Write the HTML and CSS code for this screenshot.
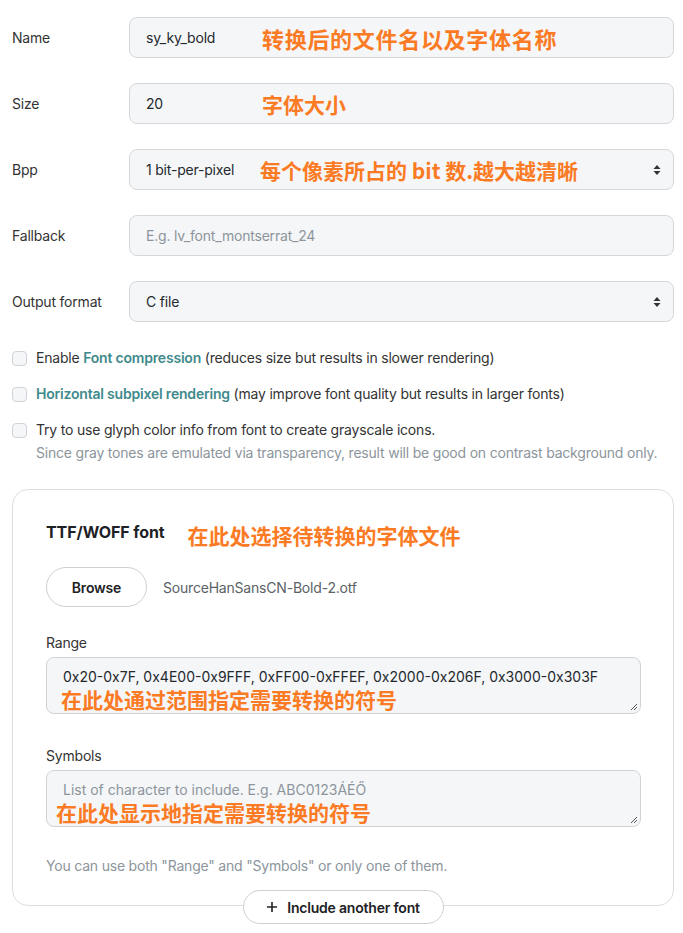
FILE: index.html
```html
<!DOCTYPE html>
<html lang="en">
<head>
<meta charset="utf-8">
<title>Font converter</title>
<link rel="stylesheet" href="styles.css">
</head>
<body>
<main class="page">
  <section class="form">
    <div class="row">
      <label class="label">Name</label>
      <div class="field"><span class="value">sy_ky_bold</span><span class="note note-wide">转换后的文件名以及字体名称</span></div>
    </div>
    <div class="row">
      <label class="label">Size</label>
      <div class="field"><span class="value">20</span><span class="note">字体大小</span></div>
    </div>
    <div class="row">
      <label class="label">Bpp</label>
      <div class="field select"><span class="value">1 bit-per-pixel</span><span class="note note-bpp">每个像素所占的 bit 数.越大越清晰</span>
        <svg class="arrows" width="8" height="12" viewBox="0 0 8 12"><path d="M4 1 L7.5 5 H0.5 Z M4 11 L7.5 7 H0.5 Z" fill="#333"/></svg>
      </div>
    </div>
    <div class="row">
      <label class="label">Fallback</label>
      <div class="field"><span class="placeholder">E.g. lv_font_montserrat_24</span></div>
    </div>
    <div class="row">
      <label class="label">Output format</label>
      <div class="field select"><span class="value">C file</span>
        <svg class="arrows" width="8" height="12" viewBox="0 0 8 12"><path d="M4 1 L7.5 5 H0.5 Z M4 11 L7.5 7 H0.5 Z" fill="#333"/></svg>
      </div>
    </div>
  </section>

  <section class="checks">
    <div class="check"><span class="box"></span><span>Enable <b class="link">Font compression</b> (reduces size but results in slower rendering)</span></div>
    <div class="check"><span class="box"></span><span><b class="link">Horizontal subpixel rendering</b> (may improve font quality but results in larger fonts)</span></div>
    <div class="check-group">
      <div class="check"><span class="box"></span><span>Try to use glyph color info from font to create grayscale icons.</span></div>
      <p class="hint">Since gray tones are emulated via transparency, result will be good on contrast background only.</p>
    </div>
  </section>

  <section class="card">
    <div class="card-title"><h2>TTF/WOFF font</h2><span class="note">在此处选择待转换的字体文件</span></div>
    <div class="file-row"><button class="pill">Browse</button><span class="filename">SourceHanSansCN-Bold-2.otf</span></div>
    <div class="group group-range">
      <label class="sub-label">Range</label>
      <div class="area">
        <span class="area-text">0x20-0x7F, 0x4E00-0x9FFF, 0xFF00-0xFFEF, 0x2000-0x206F, 0x3000-0x303F</span>
        <span class="note note-area">在此处通过范围指定需要转换的符号</span>
        <svg class="grip" width="8" height="8" viewBox="0 0 8 8"><path d="M7 1 L1 7 M7 4 L4 7" stroke="#555" stroke-width="1"/></svg>
      </div>
    </div>
    <div class="group group-symbols">
      <label class="sub-label">Symbols</label>
      <div class="area">
        <span class="area-text placeholder">List of character to include. E.g. ABC0123ÁÉŐ</span>
        <span class="note note-area note-sym">在此处显示地指定需要转换的符号</span>
        <svg class="grip" width="8" height="8" viewBox="0 0 8 8"><path d="M7 1 L1 7 M7 4 L4 7" stroke="#555" stroke-width="1"/></svg>
      </div>
    </div>
    <p class="help">You can use both "Range" and "Symbols" or only one of them.</p>
  </section>
  <div class="add-wrap">
    <button class="pill add"><svg width="12" height="12" viewBox="0 0 12 12"><path d="M6 1 V11 M1 6 H11" stroke="#222" stroke-width="1.6"/></svg>Include another font</button>
  </div>
</main>
</body>
</html>
```
FILE: styles.css
```css
* { box-sizing: border-box; }
html, body { margin: 0; padding: 0; background: #fff; }
body {
  font-family: Inter, "Noto Sans", "Noto Sans CJK SC", sans-serif;
  font-size: 14px;
  color: #2b2f33;
  letter-spacing: -0.2px;
}
.page { padding: 17px 9px 0 12px; }

.form { display: flex; flex-direction: column; gap: 25px; }
.row { display: flex; align-items: center; }
.label { width: 117px; flex: none; font-size: 14px; color: #333; }
.field {
  flex: 1;
  height: 41px;
  border: 1px solid #d5d7da;
  border-radius: 8px;
  background: #f5f6f8;
  display: flex;
  align-items: center;
  padding: 0 16px;
  position: relative;
}
.value { color: #24292e; min-width: 116px; }
.placeholder { color: #8c959c; }
.note {
  font-family: "Noto Sans CJK SC", sans-serif;
  font-weight: 700;
  font-size: 21px;
  line-height: 24px;
  color: #fb7b24;
  letter-spacing: 0;
}
.field .note-wide { font-size: 22px; letter-spacing: 0.7px; }
.field .note-bpp { margin-left: -2px; }
.arrows { position: absolute; right: 12px; top: 14px; }

.checks { margin-top: 26px; display: flex; flex-direction: column; gap: 16px; }
.check { display: flex; align-items: center; gap: 9px; line-height: 20px; color: #333; }
.box {
  width: 15px; height: 15px; flex: none;
  border: 1px solid #cfd3d7;
  border-radius: 4px;
  background: #f5f6f8;
}
.link { color: #3f8a8c; font-weight: 600; }
.hint { margin: 3px 0 0 24px; color: #8c959c; line-height: 20px; }

.card {
  margin-top: 26px;
  width: 662px;
  border: 1px solid #dcdfe2;
  border-radius: 16px;
  padding: 31px 32px 29px 33px;
}
.card-title { display: flex; align-items: center; gap: 23px; height: 22px; }
.card-title h2 { margin: 0; font-size: 16px; font-weight: 700; color: #1d2125; letter-spacing: -0.1px; }
.card-title .note { margin-top: 6px; }
.file-row { margin-top: 24px; display: flex; align-items: center; gap: 16px; }
.pill {
  font-family: inherit;
  font-size: 14px;
  font-weight: 600;
  color: #1d2125;
  background: #fff;
  border: 1px solid #cdd0d4;
  border-radius: 20px;
  letter-spacing: -0.2px;
}
.file-row .pill { width: 101px; height: 40px; }
.filename { color: #5b6267; }
.group { display: flex; flex-direction: column; gap: 4px; }
.group-range { margin-top: 26px; }
.group-symbols { margin-top: 32px; }
.sub-label { line-height: 20px; color: #333; }
.area {
  height: 57px;
  border: 1px solid #d0d3d6;
  border-radius: 8px;
  background: #f5f6f8;
  padding: 9px 16px 0;
  display: flex;
  flex-direction: column;
  position: relative;
  overflow: hidden;
}
.area-text { line-height: 20px; color: #24292e; letter-spacing: 0; }
.area-text.placeholder { color: #8c959c; }
.note-area { margin-left: -2px; }
.note-sym { margin-left: -7px; margin-top: 0; }
.grip { position: absolute; right: 2px; bottom: 2px; }
.help { margin: 29px 0 0; color: #8c959c; line-height: 20px; }

.add-wrap { display: flex; justify-content: center; width: 662px; margin-top: -16px; }
.add {
  width: 201px; height: 34px;
  display: flex; align-items: center; justify-content: center; gap: 9px;
  position: relative;
}
```
